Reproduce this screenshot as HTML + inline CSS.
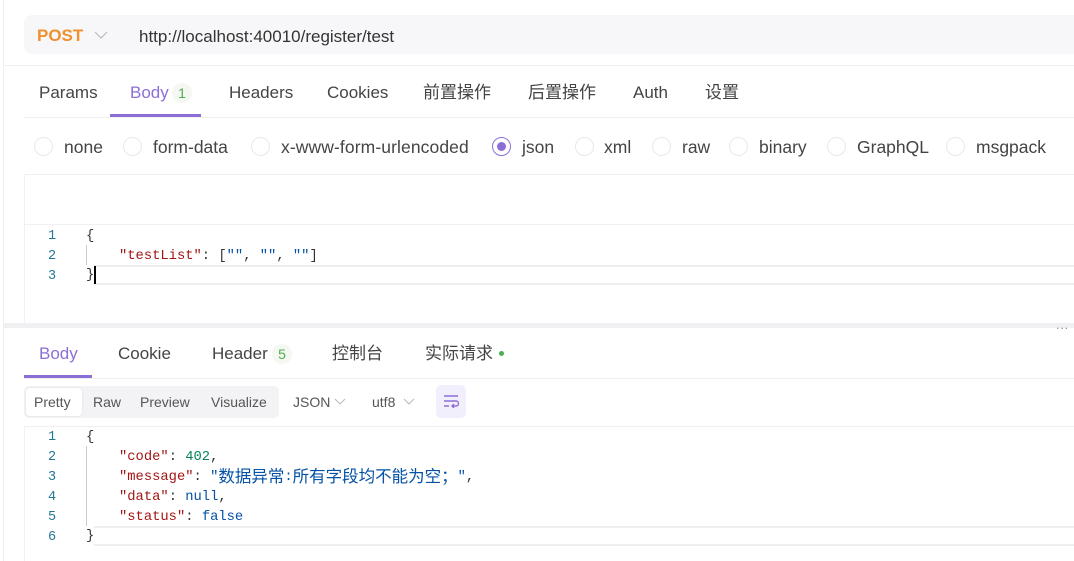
<!DOCTYPE html>
<html><head><meta charset="utf-8"><style>
*{margin:0;padding:0;box-sizing:border-box}
body{width:1074px;height:561px;overflow:hidden;background:#fff;font-family:"Liberation Sans","Noto Sans CJK SC",sans-serif;color:#333;position:relative}
.a{position:absolute;white-space:nowrap;line-height:22px}
.hl{position:absolute;background:#f0f0f0;height:1px}
.mono{font-family:"Liberation Mono","Noto Sans CJK SC",monospace;font-size:13.8px;line-height:20px}
.ln{position:absolute;left:44px;width:16px;text-align:center;color:#237893;font-family:"Liberation Mono",monospace;font-size:13.5px;line-height:20px}
.radio{position:absolute;width:19px;height:19px;border:1px solid #e8e8e8;border-radius:50%;top:137px}
.k{color:#a31515}.s{color:#0451a5}.n{color:#098658}.b{color:#0451a5}
.cj{font-size:16.5px;line-height:20px;vertical-align:top}
.t{font-size:17px;color:#444;top:82px}
.r{font-size:17.5px;color:#444;top:136px}
</style></head><body>
<div class="a" style="left:3px;top:0;width:1px;height:561px;background:#eee"></div>
<div class="a" style="left:24px;top:15px;width:1060px;height:39px;background:#f7f7f9;border-radius:8px"></div>
<div class="a" style="left:37px;top:25px;font-size:17px;font-weight:bold;color:#f0902f">POST</div>
<svg class="a" style="left:94px;top:30px" width="14" height="10"><path d="M1 2 L7 8 L13 2" fill="none" stroke="#bbb" stroke-width="1.2"/></svg>
<div class="a" style="left:139px;top:26px;font-size:17px;color:#333">http://localhost:40010/register/test</div>
<div class="hl" style="left:4px;top:65px;width:1070px"></div>
<div class="a t" style="left:39px">Params</div>
<div class="a t" style="left:130px;color:#8c6fd6">Body</div>
<div class="a" style="left:172px;top:83px;width:20px;height:20px;border-radius:10px;background:#f5f8f2;color:#4caf50;font-size:14px;text-align:center;line-height:20px">1</div>
<div class="a" style="left:110px;top:114px;width:91px;height:3px;background:#8c6fd6"></div>
<div class="a t" style="left:229px">Headers</div>
<div class="a t" style="left:327px">Cookies</div>
<div class="a t" style="left:423px">前置操作</div>
<div class="a t" style="left:528px">后置操作</div>
<div class="a t" style="left:633px">Auth</div>
<div class="a t" style="left:705px">设置</div>
<div class="hl" style="left:24px;top:117px;width:1050px"></div>
<div class="radio" style="left:34px"></div><div class="a r" style="left:64px">none</div>
<div class="radio" style="left:123px"></div><div class="a r" style="left:153px">form-data</div>
<div class="radio" style="left:251px"></div><div class="a r" style="left:281px;letter-spacing:0.1px">x-www-form-urlencoded</div>
<div class="radio" style="left:492px;border-color:#8c6fd6"><div style="position:absolute;left:4px;top:4px;width:9px;height:9px;border-radius:50%;background:#8c6fd6"></div></div><div class="a r" style="left:522px">json</div>
<div class="radio" style="left:575px"></div><div class="a r" style="left:604px">xml</div>
<div class="radio" style="left:652px"></div><div class="a r" style="left:682px">raw</div>
<div class="radio" style="left:729px"></div><div class="a r" style="left:759px">binary</div>
<div class="radio" style="left:827px"></div><div class="a r" style="left:857px">GraphQL</div>
<div class="radio" style="left:946px"></div><div class="a r" style="left:976px">msgpack</div>
<div class="hl" style="left:24px;top:174px;width:1050px"></div>
<div class="a" style="left:24px;top:174px;width:1px;height:150px;background:#f0f0f0"></div>
<div class="hl" style="left:24px;top:224px;width:1050px"></div>
<div class="ln" style="top:227px">1</div><div class="ln" style="top:247px">2</div><div class="ln" style="top:267px">3</div>
<div class="a" style="left:86px;top:245px;width:1px;height:20px;background:#ccc"></div>
<div class="a mono" style="left:86px;top:227px">{</div>
<div class="a mono" style="left:119px;top:247px"><span class="k">"testList"</span>: [<span class="s">""</span>, <span class="s">""</span>, <span class="s">""</span>]</div>
<div class="a" style="left:94px;top:265px;width:980px;height:20px;border-top:2px solid #eee;border-bottom:2px solid #eee"></div>
<div class="a mono" style="left:86px;top:266px">}</div>
<div class="a" style="left:94px;top:266px;width:2px;height:18px;background:#000"></div>
<div class="a" style="left:4px;top:323px;width:1070px;height:5px;background:#f0f0f2"></div>
<div class="a" style="left:1056px;top:314px;font-size:12px;color:#888;letter-spacing:1px">...</div>
<div class="a" style="left:39px;top:343px;font-size:17px;color:#8c6fd6">Body</div>
<div class="a" style="left:24px;top:375px;width:68px;height:3px;background:#8c6fd6"></div>
<div class="a" style="left:118px;top:343px;font-size:17px;color:#444">Cookie</div>
<div class="a" style="left:212px;top:343px;font-size:17px;color:#444">Header</div>
<div class="a" style="left:272px;top:344px;width:20px;height:20px;border-radius:10px;background:#f5f8f2;color:#4caf50;font-size:14px;text-align:center;line-height:20px">5</div>
<div class="a" style="left:332px;top:343px;font-size:17px;color:#444">控制台</div>
<div class="a" style="left:425px;top:343px;font-size:17px;color:#444">实际请求</div>
<div class="a" style="left:499px;top:351px;width:5px;height:5px;border-radius:50%;background:#4caf50"></div>
<div class="hl" style="left:24px;top:378px;width:1050px"></div>
<div class="a" style="left:24px;top:386px;width:255px;height:32px;background:#f3f3f5;border-radius:5px"></div>
<div class="a" style="left:26px;top:388px;width:56px;height:28px;background:#fff;border-radius:4px;box-shadow:0 0 2px #ddd"></div>
<div class="a" style="left:34px;top:391px;font-size:14px;color:#555">Pretty</div>
<div class="a" style="left:93px;top:391px;font-size:14px;color:#555">Raw</div>
<div class="a" style="left:140px;top:391px;font-size:14px;color:#555">Preview</div>
<div class="a" style="left:211px;top:391px;font-size:14px;color:#555">Visualize</div>
<div class="a" style="left:293px;top:391px;font-size:14px;color:#555">JSON</div>
<svg class="a" style="left:334px;top:397px" width="12" height="9"><path d="M1 2 L6 7 L11 2" fill="none" stroke="#bbb" stroke-width="1.1"/></svg>
<div class="a" style="left:372px;top:391px;font-size:14px;color:#555">utf8</div>
<svg class="a" style="left:403px;top:397px" width="12" height="9"><path d="M1 2 L6 7 L11 2" fill="none" stroke="#bbb" stroke-width="1.1"/></svg>
<div class="a" style="left:436px;top:385px;width:30px;height:33px;background:#f2effc;border-radius:5px"></div>
<svg class="a" style="left:443px;top:394px" width="16" height="14"><path d="M1 2 H15 M1 7 H13 a2.5 2.5 0 0 1 0 5 H9 M11 10 L9 12 L11 14 M1 12 H6" fill="none" stroke="#8c6fd6" stroke-width="1.4"/></svg>
<div class="hl" style="left:24px;top:426px;width:1050px"></div>
<div class="a" style="left:24px;top:426px;width:1px;height:135px;background:#f0f0f0"></div>
<div class="ln" style="top:428px">1</div><div class="ln" style="top:448px">2</div><div class="ln" style="top:468px">3</div><div class="ln" style="top:488px">4</div><div class="ln" style="top:508px">5</div><div class="ln" style="top:528px">6</div>
<div class="a" style="left:86px;top:446px;width:1px;height:80px;background:#ccc"></div>
<div class="a mono" style="left:86px;top:428px">{</div>
<div class="a mono" style="left:119px;top:448px"><span class="k">"code"</span>: <span class="n">402</span>,</div>
<div class="a mono" style="left:119px;top:468px;height:20px;overflow:visible"><span class="k">"message"</span>: <span class="s">"<span class="cj">数据异常</span>:<span class="cj">所有字段均不能为空；</span>"</span>,</div>
<div class="a mono" style="left:119px;top:488px"><span class="k">"data"</span>: <span class="b">null</span>,</div>
<div class="a mono" style="left:119px;top:508px"><span class="k">"status"</span>: <span class="b">false</span></div>
<div class="a" style="left:94px;top:526px;width:980px;height:20px;border-top:2px solid #eee;border-bottom:2px solid #eee"></div>
<div class="a mono" style="left:86px;top:527px">}</div>
</body></html>
